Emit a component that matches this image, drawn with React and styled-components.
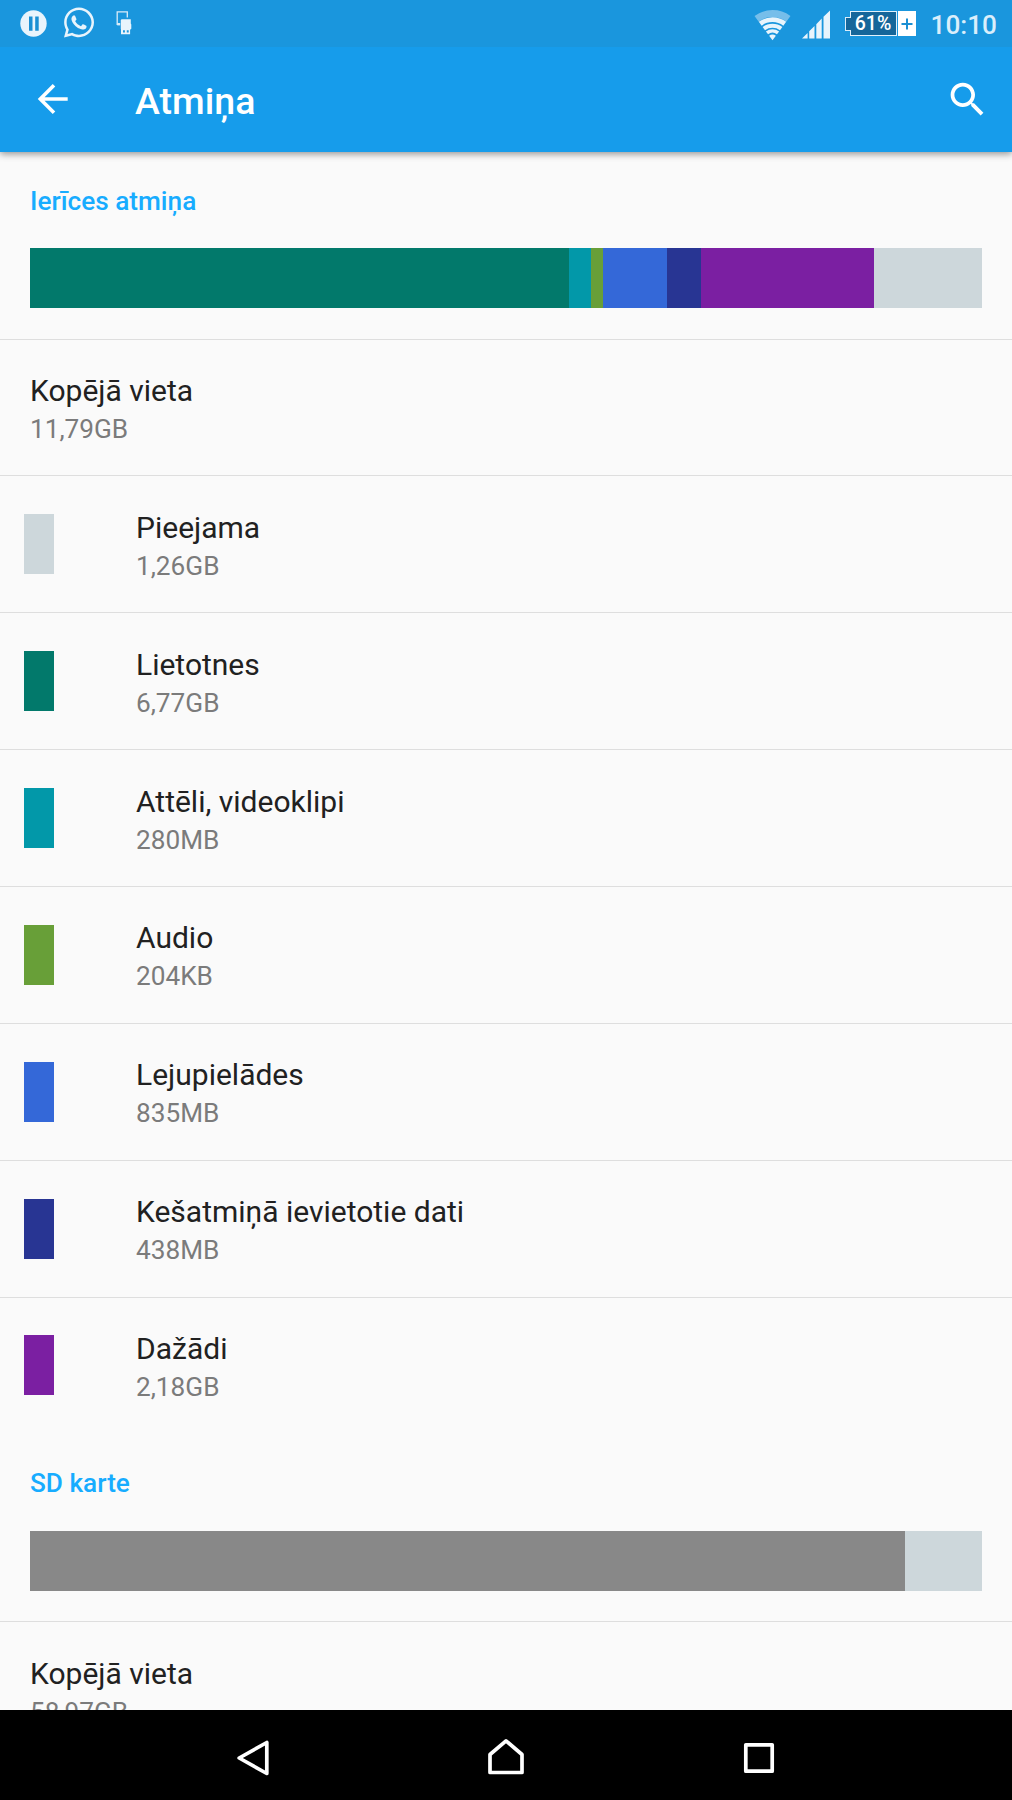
import React from "react";
import styled, { createGlobalStyle } from "styled-components";
import { FaWhatsapp } from "react-icons/fa";

const GlobalStyle = createGlobalStyle`
  * { box-sizing: border-box; }
  body { margin: 0; background: #fafafa; font-family: Roboto, "Noto Sans", sans-serif; }
`;

const Screen = styled.div`
  width: 1012px;
  height: 1800px;
  display: flex;
  flex-direction: column;
  background: #fafafa;
  overflow: hidden;
`;

const StatusBar = styled.header`
  flex: none;
  height: 47px;
  display: flex;
  align-items: flex-start;
  justify-content: space-between;
  background: #1a96dd;
  color: #e8f4fc;
`;

const StatusGroup = styled.div`
  display: flex;
  align-items: flex-start;
  padding-left: ${(p) => p.$start || 0}px;
  padding-right: ${(p) => p.$end || 0}px;
  svg { display: block; flex: none; }
`;

const Chat = styled(FaWhatsapp)`
  width: 30px;
  height: 35px;
  margin: 5px 22px 0 17px;
`;

const Battery = styled.div`
  display: flex;
  align-items: center;
  margin: 11px 0 0 15px;
`;

const BatteryNub = styled.span`
  width: 6px;
  height: 14px;
  margin-right: -1px;
  border: 1px solid #d9ecf9;
  border-right: 0;
  background: #15669a;
  z-index: 1;
`;

const BatteryBody = styled.span`
  width: 47px;
  height: 25px;
  border: 1px solid #e2f1fb;
  background: #15669a;
  color: #fff;
  font-size: 19.5px;
  line-height: 23px;
  font-weight: 500;
  text-align: center;
`;

const BatteryPlus = styled.span`
  width: 18px;
  height: 25px;
  margin-left: 1px;
  display: flex;
  align-items: center;
  justify-content: center;
  background: #fff;
`;

const Clock = styled.span`
  margin-left: 15px;
  font-size: 26.2px;
  line-height: 30px;
  padding-top: 10px;
  font-weight: 500;
  color: #daeefb;
`;

const AppBar = styled.div`
  flex: none;
  height: 105px;
  display: flex;
  align-items: center;
  padding: 0 22px 0 36px;
  background: #169ceb;
  box-shadow: 0 2px 7px rgba(0, 0, 0, 0.42);
  clip-path: inset(0 0 -12px 0);
  z-index: 1;
  svg { display: block; }
`;

const Title = styled.h1`
  flex: 1;
  margin: 3px 0 0 65px;
  font-size: 37.5px;
  line-height: 44px;
  font-weight: 500;
  color: #fff;
`;

const Content = styled.main`
  flex: 1;
  min-height: 0;
  overflow: hidden;
`;

const SectionHead = styled.div`
  height: 186.6px;
  margin-top: ${(p) => p.$gap || 0}px;
  padding: 33.6px 30px 0;
`;

const SectionTitle = styled.h2`
  margin: 0;
  height: 62.7px;
  font-size: 26.2px;
  line-height: 31px;
  font-weight: 500;
  color: #17acff;
`;

const UsageBar = styled.div`
  display: flex;
  height: 60px;
`;

const Segment = styled.span`
  flex: ${(p) => p.$share} 0 0;
  background: ${(p) => p.$color};
`;

const Row = styled.div`
  height: 136.85px;
  display: flex;
  align-items: center;
  padding-left: ${(p) => (p.$indent ? 23.5 : 30)}px;
  border-top: 1px solid #dedede;
`;

const Swatch = styled.span`
  width: 30px;
  height: 60px;
  margin-right: 82.5px;
  background: ${(p) => p.$color};
`;

const Label = styled.div`
  margin-top: 3px;
  font-size: 30px;
  line-height: 39px;
  color: #212121;
`;

const Value = styled.div`
  margin-top: 2px;
  font-size: 26.2px;
  line-height: 35px;
  font-kerning: none;
  color: #7b7b7b;
`;

const NavBar = styled.nav`
  flex: none;
  height: 90px;
  display: flex;
  justify-content: center;
  gap: 213px;
  align-items: center;
  padding-top: 6px;
  background: #000;
  svg { display: block; }
`;

const PauseIcon = () => (
  <svg width="27" height="27" viewBox="0 0 27 27" style={{ marginTop: 10 }}>
    <circle cx="13.5" cy="13.5" r="13.2" fill="#e8f4fc" />
    <path d="M9 6.500h3.500v14.300H9zM15.200 6.500h3.500v14.300h-3.500z" fill="#1a8fd3" />
  </svg>
);

const DeviceIcon = () => (
  <svg width="17" height="25" viewBox="0 0 17 25" style={{ marginTop: 10 }}>
    <path d="M11.300 7.500V1.800H1.200v12.600h2.600M1 14.200h3" fill="none" stroke="#d9ecf9" strokeWidth="1.300" />
    <path d="M1.200 13h3v2.400h-3z" fill="#d9ecf9" />
    <path
      d="M5.600 9.300h9.200v4.200l.5 1v4.300l-1.200 1V24.200H5V19.500l-.2-.8V10.100z"
      fill="#e8f4fc"
    />
    <path d="M7 20.300h1.900v2.200H7zM10.800 20.300h1.900v2.200h-1.900z" fill="#1a96dd" />
  </svg>
);

const wifiArc = (r) => {
  const dx = r * 0.595;
  const y = 31.300 - r * 0.804;
  return `M${18.500 - dx} ${y}A${r} ${r} 0 0 1 ${18.500 + dx} ${y}`;
};

const WifiIcon = () => (
  <svg width="37" height="32" viewBox="0 0 37 32" fill="none" style={{ marginTop: 9 }}>
    <path d={wifiArc(26.700)} stroke="#76beea" strokeWidth="7" />
    <path d={wifiArc(20.600)} stroke="#e8f4fc" strokeWidth="4.800" />
    <path d={wifiArc(14.600)} stroke="#e8f4fc" strokeWidth="4" />
    <path d={wifiArc(9.300)} stroke="#e8f4fc" strokeWidth="3.600" />
    <path d={`${wifiArc(5.700)}L18.500 31.300Z`} fill="#e8f4fc" />
  </svg>
);

const SignalIcon = () => (
  <svg width="28" height="29" viewBox="0 0 28 29" style={{ margin: "10px 0 0 11px" }}>
    <path
      d="M0 28.500L5.600 22.900V28.500ZM7.200 21.300L12.500 16V28.500H7.200ZM14.300 14.200L19.700 8.500V28.500H14.300ZM21.500 6.700L28 .5V28.500H21.500Z"
      fill="#e8f4fc"
    />
  </svg>
);

const BackArrow = () => (
  <svg width="34" height="32" viewBox="0 0 34 32" style={{ marginTop: -1 }}>
    <path d="M31.700 16H4.500M18 2.300L4.300 16L18 29.700" fill="none" stroke="#fff" strokeWidth="3.600" />
  </svg>
);

const SearchIcon = () => (
  <svg width="45" height="45" viewBox="0 0 24 24" style={{ marginTop: -1 }}>
    <path
      d="M15.500 14h-.79l-.28-.27C15.410 12.590 16 11.110 16 9.500 16 5.910 13.090 3 9.500 3S3 5.910 3 9.500 5.910 16 9.500 16c1.610 0 3.090-.59 4.230-1.570l.27.28v.79l5 4.990L20.490 19l-4.990-5zm-6 0C7.010 14 5 11.990 5 9.500S7.010 5 9.500 5 14 7.010 14 9.500 11.990 14 9.500 14z"
      fill="#fff"
    />
  </svg>
);

const NavIcon = ({ d }) => (
  <svg width="40" height="40" viewBox="0 0 40 40">
    <path d={d} fill="none" stroke="#fff" strokeWidth="3.700" strokeLinejoin="round" />
  </svg>
);

const deviceUsage = [
  [539, "#02796b"],
  [22.300, "#0298a9"],
  [11.200, "#689f38"],
  [64.500, "#3468d8"],
  [34.200, "#283593"],
  [173, "#7b1fa2"],
  [107.800, "#cdd7db"],
];

const sdUsage = [
  [875.300, "#888888"],
  [76.700, "#cdd7db"],
];

const categories = [
  ["Pieejama", "1,26GB", "#cdd7db"],
  ["Lietotnes", "6,77GB", "#02796b"],
  ["Attēli, videoklipi", "280MB", "#0298a9"],
  ["Audio", "204KB", "#689f38"],
  ["Lejupielādes", "835MB", "#3468d8"],
  ["Kešatmiņā ievietotie dati", "438MB", "#283593"],
  ["Dažādi", "2,18GB", "#7b1fa2"],
];

const Section = ({ title, usage, gap }) => (
  <SectionHead $gap={gap}>
    <SectionTitle>{title}</SectionTitle>
    <UsageBar>
      {usage.map(([share, color]) => (
        <Segment key={color} $share={share} $color={color} />
      ))}
    </UsageBar>
  </SectionHead>
);

const StorageRow = ({ label, value, color }) => (
  <Row $indent={!!color}>
    {color && <Swatch $color={color} />}
    <div>
      <Label>{label}</Label>
      <Value>{value}</Value>
    </div>
  </Row>
);

export default function App() {
  return (
    <Screen>
      <GlobalStyle />
      <StatusBar>
        <StatusGroup $start={20}>
          <PauseIcon />
          <Chat />
          <DeviceIcon />
        </StatusGroup>
        <StatusGroup $end={15}>
          <WifiIcon />
          <SignalIcon />
          <Battery>
            <BatteryNub />
            <BatteryBody>61%</BatteryBody>
            <BatteryPlus>
              <svg width="12" height="12" viewBox="0 0 12 12">
                <path d="M6 .5v11M.5 6h11" stroke="#1a8fd3" strokeWidth="2" />
              </svg>
            </BatteryPlus>
          </Battery>
          <Clock>10:10</Clock>
        </StatusGroup>
      </StatusBar>
      <AppBar>
        <BackArrow />
        <Title>Atmiņa</Title>
        <SearchIcon />
      </AppBar>
      <Content>
        <Section title="Ierīces atmiņa" usage={deviceUsage} />
        <StorageRow label="Kopējā vieta" value="11,79GB" />
        {categories.map(([label, value, color]) => (
          <StorageRow key={label} label={label} value={value} color={color} />
        ))}
        <Section title="SD karte" usage={sdUsage} gap={1.2} />
        <StorageRow label="Kopējā vieta" value="58,97GB" />
      </Content>
      <NavBar>
        <NavIcon d="M33.800 4.500V35.500L6.200 20Z" />
        <NavIcon d="M4 16.500L20 2.800L36 16.500V34.500H4Z" />
        <NavIcon d="M6.800 6.800H33.200V33.200H6.800Z" />
      </NavBar>
    </Screen>
  );
}
